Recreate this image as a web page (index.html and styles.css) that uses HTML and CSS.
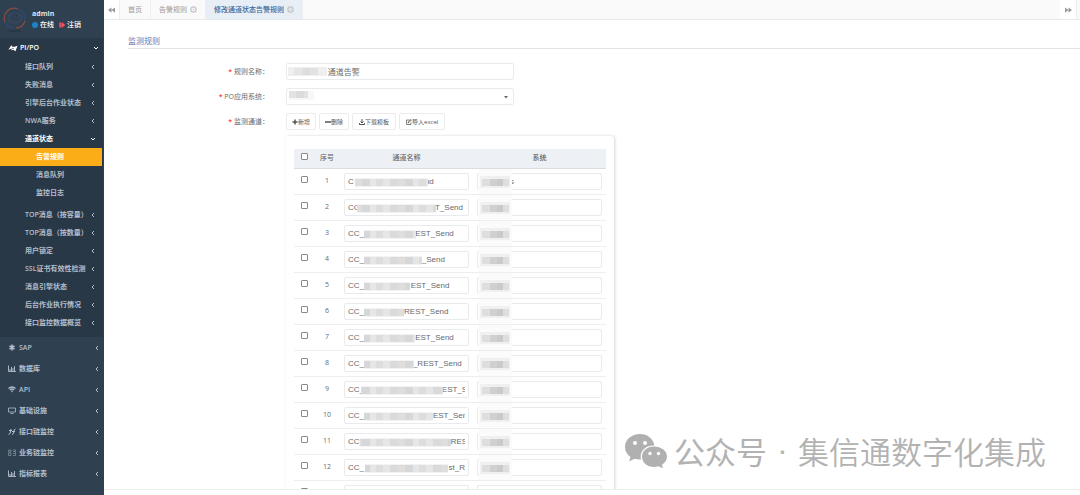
FILE: index.html
```html
<!DOCTYPE html>
<html lang="zh-CN">
<head>
<meta charset="utf-8">
<title>修改通道状态告警规则</title>
<link rel="stylesheet" href="styles.css">
</head>
<body>
<svg class="defs" aria-hidden="true">
  <defs>
    <pattern id="tiles" width="43" height="10" patternUnits="userSpaceOnUse">
      <rect width="43" height="10" fill="#e6e6e7"/>
      <rect x="7" width="8" height="10" fill="#dadadb"/>
      <rect x="15" width="7" height="10" fill="#e0dedd"/>
      <rect x="22" width="8" height="10" fill="#d6d7d9"/>
      <rect x="36" width="7" height="10" fill="#dddddf"/>
    </pattern>
    <symbol id="left" viewBox="0 0 6 6"><path d="M4 1 2 3 4 5" fill="none" stroke="currentColor"/></symbol>
    <symbol id="down" viewBox="0 0 6 6"><path d="M1 2 3 4 5 2" fill="none" stroke="currentColor"/></symbol>
    <symbol id="chart" viewBox="0 0 16 14"><path d="M1 1v12h15M4 12V8M7 12V4M10 12V6M13 12V2" fill="none" stroke="currentColor" stroke-width="1.8"/></symbol>
    <symbol id="closer" viewBox="0 0 12 12"><circle cx="6" cy="6" r="4.500" fill="none" stroke="currentColor" stroke-width="2"/><path d="m4.500 4.500 3 3M7.500 4.500l-3 3" stroke="currentColor" stroke-width="1.2"/></symbol>
  </defs>
</svg>

<aside class="sidebar">
  <header class="user">
    <svg class="avatar" viewBox="0 0 26 26" aria-hidden="true">
      <g fill="none" stroke-width="1.2"><path d="M3 16A10 10 0 0 1 16 3" stroke="#8a4b3d"/><path d="M16 3a10 10 0 0 1 7 12" stroke="#2d4a7a"/><path d="M3 16a10 10 0 0 0 9 6" stroke="#2d4a7a"/><path d="M23 15a10 10 0 0 1-9 7" stroke="#8a4b3d"/><ellipse cx="13" cy="12" rx="7" ry="5" stroke="#3a4a63"/><path d="M13 7v10M9 9v6M17 9v6" stroke="#35445c"/><path d="M7 25h12" stroke="#26313f"/></g>
    </svg>
    <div class="who">
      <strong>admin</strong>
      <div class="status">
        <svg class="dot" viewBox="0 0 6 6" aria-hidden="true"><circle cx="3" cy="3" r="3" fill="#1c84c6"/></svg><a href="#">在线</a>
        <svg class="dot" viewBox="0 0 6 6" aria-hidden="true"><path d="M2.3.8H.5v4.400h1.800M3 .5 6 3 3 5.500V4H1.500V2H3z" fill="#ed5565" stroke="#ed5565" stroke-width=".5"/></svg><a href="#">注销</a>
      </div>
    </div>
  </header>

  <nav>
    <section class="group">
      <a class="top on" href="#"><svg class="icon" viewBox="0 0 16 14" aria-hidden="true"><path d="m0 10 5-8 2 3 4 0 5-2-4 10-3-3-4 1 1-3zM7 7l0 2 3-1z" fill="currentColor"/></svg><span>PI/PO</span><svg class="chev"><use href="#down"/></svg></a>
      <ul>
        <li><a href="#"><span>接口队列</span><svg class="chev"><use href="#left"/></svg></a></li>
        <li><a href="#"><span>失败消息</span><svg class="chev"><use href="#left"/></svg></a></li>
        <li><a href="#"><span>引擎后台作业状态</span><svg class="chev"><use href="#left"/></svg></a></li>
        <li><a href="#"><span>NWA服务</span><svg class="chev"><use href="#left"/></svg></a></li>
        <li><a class="on" href="#"><span>通道状态</span><svg class="chev"><use href="#down"/></svg></a>
          <ul class="third">
            <li><a class="current" href="#">告警规则</a></li>
            <li><a href="#">消息队列</a></li>
            <li><a href="#">监控日志</a></li>
          </ul>
        </li>
        <li><a href="#"><span>TOP消息（按容量）</span><svg class="chev"><use href="#left"/></svg></a></li>
        <li><a href="#"><span>TOP消息（按数量）</span><svg class="chev"><use href="#left"/></svg></a></li>
        <li><a href="#"><span>用户锁定</span><svg class="chev"><use href="#left"/></svg></a></li>
        <li><a href="#"><span>SSL证书有效性检测</span><svg class="chev"><use href="#left"/></svg></a></li>
        <li><a href="#"><span>消息引擎状态</span><svg class="chev"><use href="#left"/></svg></a></li>
        <li><a href="#"><span>后台作业执行情况</span><svg class="chev"><use href="#left"/></svg></a></li>
        <li><a href="#"><span>接口监控数据概览</span><svg class="chev"><use href="#left"/></svg></a></li>
      </ul>
    </section>
    <a class="top" href="#"><svg class="icon" viewBox="0 0 16 14" aria-hidden="true"><path d="M8 1v12M3 4l10 6M13 4 3 10" stroke="currentColor" stroke-width="3"/></svg><span>SAP</span><svg class="chev"><use href="#left"/></svg></a>
    <a class="top" href="#"><svg class="icon"><use href="#chart"/></svg><span>数据库</span><svg class="chev"><use href="#left"/></svg></a>
    <a class="top" href="#"><svg class="icon" viewBox="0 0 16 14" aria-hidden="true"><path d="M1 5q7-6 14 0M4 8q4-4 8 0" fill="none" stroke="currentColor" stroke-width="2.8"/><path d="m6 10 2-1 2 1-2 3z" fill="currentColor"/></svg><span>API</span><svg class="chev"><use href="#left"/></svg></a>
    <a class="top" href="#"><svg class="icon" viewBox="0 0 16 14" aria-hidden="true"><path d="M1 2h14v8H1zM5 13h6" fill="none" stroke="currentColor" stroke-width="1.6"/></svg><span>基础设施</span><svg class="chev"><use href="#left"/></svg></a>
    <a class="top" href="#"><svg class="icon" viewBox="0 0 16 14" aria-hidden="true"><path d="M1 13q3 0 4-5l1-6M2 5h6M8 13q3 0 4-6 0-5 3-5M8 7h6" fill="none" stroke="currentColor" stroke-width="2"/></svg><span>接口链监控</span><svg class="chev"><use href="#left"/></svg></a>
    <a class="top" href="#"><svg class="icon" viewBox="0 0 16 14" aria-hidden="true"><path d="M1 2h5v4H1zM1 8h5v5H1zM10 2h5v11h-5M10 5h4M10 9h4" fill="none" stroke="currentColor" stroke-width="1.3" opacity=".7"/></svg><span>业务链监控</span><svg class="chev"><use href="#left"/></svg></a>
    <a class="top" href="#"><svg class="icon"><use href="#chart"/></svg><span>指标报表</span><svg class="chev"><use href="#left"/></svg></a>
  </nav>
</aside>

<main>
  <div class="tabs">
    <button class="scroll" aria-label="向左"><svg viewBox="0 0 8 6"><path d="M4 0v6L0 3zM8 0v6L4 3z" fill="currentColor"/></svg></button>
    <a class="tab" href="#">首页</a>
    <a class="tab" href="#">告警规则<svg><use href="#closer"/></svg></a>
    <a class="tab active" href="#">修改通道状态告警规则<svg><use href="#closer"/></svg></a>
    <button class="scroll end" aria-label="向右"><svg viewBox="0 0 8 6"><path d="M0 0v6l4-3zM4 0v6l4-3z" fill="currentColor"/></svg></button>
  </div>

  <div class="content">
    <h1>监测规则</h1>
    <form>
      <div class="row">
        <label for="rule"><i>*</i> 规则名称：</label>
        <div class="field">
          <input id="rule" type="text" value="                 通道告警">
          <svg class="mask" aria-hidden="true"><rect x="2" y="4" width="39" height="9" fill="#efefef"/><rect x="8" y="5" width="9" height="7" fill="#e5e5e5"/><rect x="17" y="5" width="7" height="7" fill="#dfdcdb"/><rect x="24" y="5" width="8" height="7" fill="#e2e2e3"/></svg>
        </div>
      </div>
      <div class="row">
        <label for="system"><i>*</i> PO应用系统：</label>
        <div class="field">
          <select id="system"><option></option></select>
          <svg class="mask" aria-hidden="true"><rect x="3" y="3" width="25" height="9" fill="#f7f7f7"/><rect x="3" y="3" width="19" height="7" fill="#e2e2e2"/><rect x="10" y="3" width="8" height="7" fill="#dadbdc"/></svg>
          <svg class="caret" viewBox="0 0 4 3" aria-hidden="true"><path d="M0 0h4L2 2.500z" fill="#666"/></svg>
        </div>
      </div>
      <div class="row">
        <span class="label"><i>*</i> 监测通道：</span>
        <div class="buttons">
          <button type="button"><svg viewBox="0 0 12 12"><path d="M6 1v10M1 6h10" stroke="currentColor" stroke-width="3"/></svg>新增</button>
          <button type="button"><svg viewBox="0 0 12 12"><path d="M0 6h12" stroke="currentColor" stroke-width="3"/></svg>删除</button>
          <button type="button" class="wide"><svg viewBox="0 0 12 12"><path d="M6 0v7M3 5l3 3 3-3M1 8v3h10V8" fill="none" stroke="currentColor" stroke-width="2"/></svg>下载模板</button>
          <button type="button" class="wide"><svg viewBox="0 0 12 12"><path d="M7 2H1v9h9V7M4 8l1-3 5-4 1 1-5 5z" fill="none" stroke="currentColor" stroke-width="1.5"/></svg>导入excel</button>
        </div>
      </div>
      <div class="panel">
        <table>
          <thead>
            <tr><th class="check"><input type="checkbox" aria-label="全选"></th><th class="num">序号</th><th>通道名称</th><th>系统</th></tr>
          </thead>
          <tbody id="channels"></tbody>
        </table>
      </div>
    </form>
  </div>
  <footer></footer>
</main>

<div class="account">
  <svg viewBox="0 0 42 34" aria-hidden="true">
    <path d="M15 0C6.500 0 0 5.500 0 13c0 4 2 7.500 5.500 10L4 27.500l5.500-2.800c2 .5 4 .8 6.500.7C14 17 21 11 29.500 11.500 28 4.500 22.500 0 15 0z" fill="#b0b0b0"/>
    <path d="M29 12.500c-7 0-12 4.500-12 10.300S22 33 29 33c1.700 0 3.200-.2 4.500-.7l4.500 2-1-3.500c3-2 5-5 5-8.300 0-5.800-6-10-13-10z" fill="#b0b0b0"/>
    <g fill="#fff"><circle cx="10" cy="9" r="2"/><circle cx="20" cy="9" r="2"/><circle cx="25" cy="19.500" r="1.700"/><circle cx="33.500" cy="19.500" r="1.700"/></g>
  </svg>
  <span class="kind">公众号</span><span class="sep">·</span><span>集信通数字化集成</span>
</div>
<script src="app.js"></script>
</body>
</html>
```
FILE: styles.css
```css
* { box-sizing: border-box; }
body {
  margin: 0;
  display: flex;
  height: 100vh;
  overflow: hidden;
  background: #fff;
  color: #676a6c;
  font: 7px/10px "Open Sans", "Noto Sans CJK SC", sans-serif;
}
a { color: inherit; text-decoration: none; }
ul { margin: 0; padding: 0; list-style: none; }
input, select, button { font: inherit; color: inherit; margin: 0; }
svg { flex: none; }
.defs { position: absolute; width: 0; height: 0; }

.sidebar {
  flex: none;
  width: 104px;
  overflow: hidden;
  background: #2f4050;
  color: #b4bfcd;
  font-weight: 600;
}
.user { display: flex; align-items: center; gap: 4px; height: 38px; padding-left: 2px; color: #fff; }
.avatar { width: 26px; height: 26px; }
.who strong { color: #dfe4ed; font-weight: 700; }
.status { display: flex; align-items: center; gap: 2px; font-weight: 500; margin-top: 1px; }
.status a { margin-right: 3px; }
.dot { width: 6px; height: 6px; }
.group { background: #293846; padding-bottom: 5px; border-right: 1px solid #2f4050; }
.group .top { height: 20px; padding-right: 4px; }
.top { display: flex; align-items: center; height: 21px; padding: 0 4px 0 8px; }
.top span { margin-left: 3px; }
.icon { width: 8px; height: 7px; }
.group .icon { width: 10px; height: 8px; }
.group .top span { margin-left: 2px; }
.on { color: #fff; }
.chev { width: 6px; height: 6px; margin-left: auto; }
.group li a { display: flex; align-items: center; height: 18px; padding: 0 7px 0 25px; white-space: nowrap; }
.third { padding-bottom: 4px; }
.group .third a { padding-left: 36px; margin-right: 1px; }
.group .third .current { background: #fbad17; color: #fff; }

main { flex: 1; min-width: 0; display: flex; flex-direction: column; }
.tabs { flex: none; display: flex; height: 20px; background: #fafafa; border-bottom: 1px solid #e7eaec; color: #999; }
.scroll { width: 16px; padding: 0; border: 0; border-right: 1px solid #eee; background: #fff; color: #999; }
.scroll svg { width: 7px; height: 6px; display: block; margin: auto; }
.end { margin: 0 3px 0 auto; width: 17px; }
.tab { display: flex; align-items: center; gap: 3px; padding: 0 8px; border-right: 1px solid #eee; }
.tab svg { width: 7px; height: 7px; color: #c4c4c4; }
.active { background: #e8eef5; color: #3d6595; font-weight: 500; }

.content { flex: 1; min-height: 0; overflow: hidden; padding-left: 24px; }
h1 { margin: 14px 0; padding-bottom: 1px; border-bottom: 1px solid #e4e4e4; color: #6379bb; font: 400 8px/13px "Noto Sans CJK SC", sans-serif; }
.row { display: flex; align-items: center; height: 17px; margin-bottom: 8px; }
.row label, .label { width: 158px; padding-right: 17px; text-align: right; }
.row i { color: #f00; font-style: normal; }
.field { position: relative; width: 228px; height: 17px; }
.field input, .field select, td input[type="text"] {
  display: block;
  width: 100%;
  height: 17px;
  padding: 0 3px;
  border: 1px solid #e9eaeb;
  border-radius: 2px;
  background: #fff;
  font: 8px/15px "Liberation Sans", "Noto Sans CJK SC", sans-serif;
}
.field select { appearance: none; }
.mask { position: absolute; left: 0; top: 0; width: 100%; height: 100%; pointer-events: none; }
.caret { position: absolute; right: 6px; top: 8px; width: 4px; height: 3px; }
.buttons { display: flex; gap: 3px; }
.buttons button {
  display: flex;
  align-items: center;
  height: 17px;
  padding: 0 5px;
  border: 1px solid #ececec;
  border-radius: 2px;
  background: #fff;
  color: #555;
  font-size: 6px;
}
.buttons .wide { padding: 0 6px; }
.buttons svg { width: 6px; height: 6px; }
.panel {
  width: 328px;
  margin: -2px 0 0 158px;
  padding: 13px 8px 0;
  border-radius: 3px;
  box-shadow: 1px 0 3px #d4d4d4;
}
table { width: 100%; table-layout: fixed; border-collapse: collapse; text-align: center; }
th { height: 19px; padding: 0; background: #edf1f6; border-bottom: 1px solid #ddd; font-weight: 500; }
.check { width: 20px; }
.num { width: 26px; }
td { position: relative; height: 26px; padding: 0 4px; border-bottom: 1px solid #eee; }
input[type="checkbox"] {
  appearance: none;
  display: block;
  width: 7px;
  height: 7px;
  margin: 0 auto 3px;
  border: 1px solid #8a8a8a;
  border-radius: 1px;
  background: #fff;
}
td:first-child { padding: 0; }
td:nth-child(2) { padding: 0; }
footer { flex: none; height: 6px; border-top: 1px solid #eee; background: #fff; }

.account {
  position: absolute;
  right: 34px;
  bottom: 24px;
  display: flex;
  align-items: center;
  color: #b2b2b2;
  font: 350 31px/40px "Noto Sans CJK SC", sans-serif;
}
.account svg { width: 42px; height: 34px; margin-right: 7px; }
.kind { font-weight: 400; }
.sep { width: 31px; text-align: center; font-family: "Liberation Sans", sans-serif; }
```
FILE: app.js
```js
// Each channel: visible prefix, gap length, visible suffix, mask start and mask width.
const channels = [
  ["C", 32, "nd", 15, 73],
  ["CC", 34, "T_Send", 17, 79],
  ["CC_", 23, "EST_Send", 24, 52],
  ["CC_", 26, "_Send", 24, 58],
  ["CC_", 21, "EST_Send", 24, 46],
  ["CC_", 18, "REST_Send", 24, 40],
  ["CC_", 23, "EST_Send", 24, 51],
  ["CC_", 22, "_REST_Send", 24, 50],
  ["CC_", 35, "EST_Send", 21, 82],
  ["CC_", 31, "EST_Send", 24, 69],
  ["CC_", 39, "REST_Send", 20, 91],
  ["CC_", 38, "st_REST_Send", 25, 83],
  ["", 0, "", 0, 0],
];

const systemMask = `<svg class="mask" aria-hidden="true">
  <rect x="6" width="33" height="26" fill="#fbfbfb"/>
  <rect x="7" y="7" width="30" height="12" fill="#f0f0f0"/>
  <rect x="9" y="10" width="27" height="7" fill="#dedede"/>
  <rect x="17" y="10" width="7" height="7" fill="#d0d0d0"/>
  <rect x="24" y="10" width="6" height="7" fill="#cacaca"/></svg>`;

document.getElementById("channels").innerHTML = channels.map(([start, gap, end, x, w], i) => `
  <tr>
    <td><input type="checkbox" aria-label="选择 ${i + 1}"></td>
    <td>${w ? i + 1 : ""}</td>
    <td><input type="text" aria-label="通道名称 ${i + 1}" value="${start}${" ".repeat(gap)}${end}">
      <svg class="mask" aria-hidden="true"><rect x="${x}" y="9" width="${w}" height="9" fill="#f3f3f3"/><rect x="${x}" y="10" width="${w}" height="7" fill="url(#tiles)"/></svg></td>
    <td><input type="text" aria-label="系统 ${i + 1}" value="${i === 0 ? " ".repeat(13) + "s" : ""}">${w ? systemMask : ""}</td>
  </tr>`).join("");
```
